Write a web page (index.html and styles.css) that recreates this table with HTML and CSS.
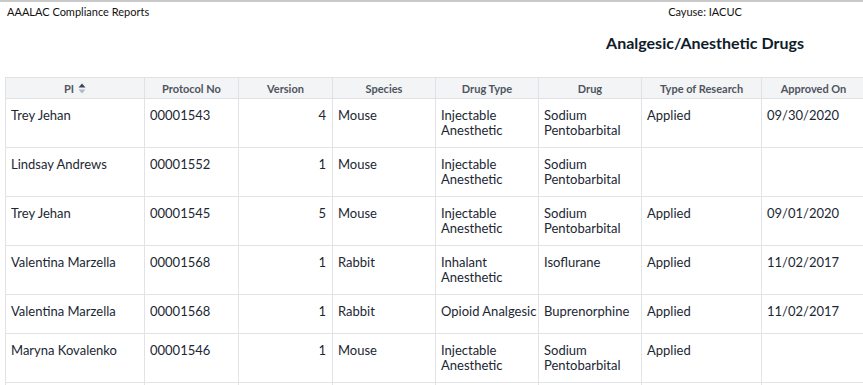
FILE: index.html
```html
<!DOCTYPE html>
<html>
<head>
<meta charset="utf-8">
<link rel="stylesheet" href="styles.css">
</head>
<body>
<div class="page">
  <div class="topbar">
    <div class="org">AAALAC Compliance Reports</div>
    <div class="titles">
      <div class="source">Cayuse: IACUC</div>
      <h1 class="title">Analgesic/Anesthetic Drugs</h1>
    </div>
  </div>
  <table class="report">
    <colgroup>
      <col class="c1"><col class="c2"><col class="c3"><col class="c4"><col class="c5"><col class="c6"><col class="c7"><col class="c8">
    </colgroup>
    <thead>
      <tr>
        <th><span class="sortable">PI <svg class="sort" width="8" height="11" viewBox="0 0 8 11"><path d="M0.5 4.5 L4 0.5 L7.5 4.5 Z" fill="#3b4656"/><path d="M0.5 6.5 L4 10.5 L7.5 6.5 Z" fill="#b4b9c1"/></svg></span></th>
        <th>Protocol No</th>
        <th>Version</th>
        <th>Species</th>
        <th>Drug Type</th>
        <th>Drug</th>
        <th>Type of Research</th>
        <th>Approved On</th>
      </tr>
    </thead>
    <tbody>
      <tr class="tall">
        <td>Trey Jehan</td><td>00001543</td><td class="num">4</td><td>Mouse</td><td>Injectable<br>Anesthetic</td><td>Sodium<br>Pentobarbital</td><td>Applied</td><td>09/30/2020</td>
      </tr>
      <tr class="tall">
        <td>Lindsay Andrews</td><td>00001552</td><td class="num">1</td><td>Mouse</td><td>Injectable<br>Anesthetic</td><td>Sodium<br>Pentobarbital</td><td></td><td></td>
      </tr>
      <tr class="tall">
        <td>Trey Jehan</td><td>00001545</td><td class="num">5</td><td>Mouse</td><td>Injectable<br>Anesthetic</td><td>Sodium<br>Pentobarbital</td><td>Applied</td><td>09/01/2020</td>
      </tr>
      <tr class="tall">
        <td>Valentina Marzella</td><td>00001568</td><td class="num">1</td><td>Rabbit</td><td>Inhalant<br>Anesthetic</td><td>Isoflurane</td><td>Applied</td><td>11/02/2017</td>
      </tr>
      <tr class="short">
        <td>Valentina Marzella</td><td>00001568</td><td class="num">1</td><td>Rabbit</td><td>Opioid Analgesic</td><td>Buprenorphine</td><td>Applied</td><td>11/02/2017</td>
      </tr>
      <tr class="tall">
        <td>Maryna Kovalenko</td><td>00001546</td><td class="num">1</td><td>Mouse</td><td>Injectable<br>Anesthetic</td><td>Sodium<br>Pentobarbital</td><td>Applied</td><td></td>
      </tr>
      <tr class="tall">
        <td></td><td></td><td></td><td></td><td></td><td></td><td></td><td></td>
      </tr>
    </tbody>
  </table>
</div>
</body>
</html>
```
FILE: styles.css
```css
html, body {
  margin: 0;
  padding: 0;
  background: #ffffff;
  overflow: hidden;
}
body {
  font-family: Lato, "Open Sans", sans-serif;
  color: #1b2733;
  width: 863px;
  height: 385px;
}
.page {
  border-top: 2px solid #c9c9c9;
  padding-left: 5px;
}
.topbar {
  display: flex;
  height: 75px;
}
.org {
  font-size: 11px;
  padding-top: 3px;
  padding-left: 2px;
  width: 543px;
  color: #111;
}
.titles {
  display: flex;
  flex-direction: column;
  align-items: center;
  width: 310px;
}
.source {
  font-size: 11px;
  padding-top: 3px;
  color: #111;
}
.title {
  margin: 0;
  font-size: 16px;
  font-weight: 700;
  padding-top: 15px;
  color: #101c2a;
}
.report {
  border-collapse: collapse;
  table-layout: fixed;
  width: 860px;
  font-size: 13px;
}
.c1 { width: 139px; }
.c2 { width: 94px; }
.c3 { width: 94px; }
.c4 { width: 103px; }
.c5 { width: 103px; }
.c6 { width: 103px; }
.c7 { width: 120px; }
.c8 { width: 104px; }
.report th {
  background: #f3f4f6;
  border: 1px solid #dfe1e5;
  font-size: 11px;
  font-weight: 700;
  color: #4f5560;
  height: 20px;
  padding: 0 4px;
  text-align: center;
  vertical-align: middle;
}
.sortable {
  display: inline-flex;
  align-items: center;
  gap: 4px;
}
.sort {
  display: block;
}
.report td {
  border: 1px solid #e1e3e7;
  padding: 9px 5px 0 5px;
  vertical-align: top;
  line-height: 15px;
  white-space: nowrap;
}
.report td.num {
  text-align: right;
  padding-right: 6px;
}
.tall { height: 49px; }
.short { height: 39px; }
```
